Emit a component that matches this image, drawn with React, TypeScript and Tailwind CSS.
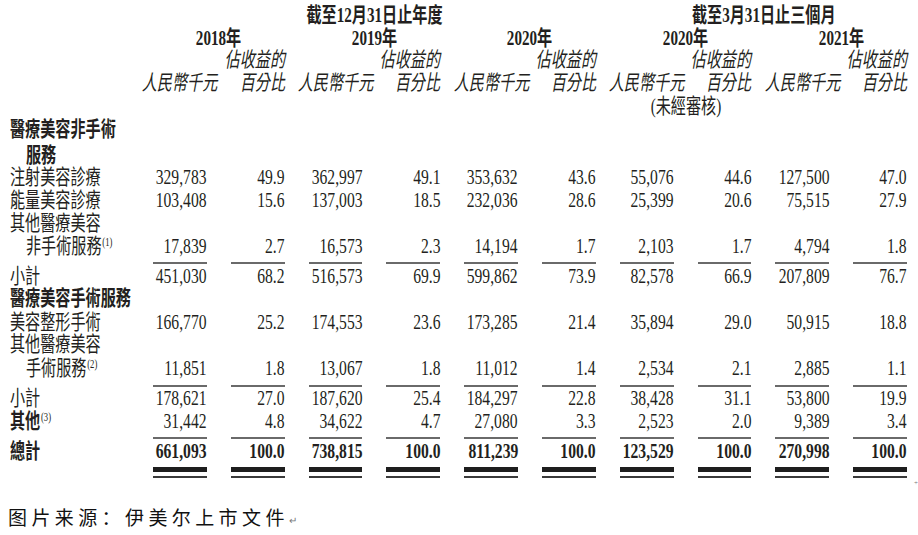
import React from "react";

const FONT = "font-['Liberation_Serif','Noto_Sans_CJK_TC','Noto_Sans_CJK_SC',serif]";

type RowData = {
  label: React.ReactNode;
  values?: string[];
  bold?: boolean;
  indent?: boolean;
  cls: string;
};

function Sup({ n }: { n: string }) {
  return <span className="text-[12px] align-top relative top-[-4px] ml-[1px]">({n})</span>;
}

function Label({ children, bold, indent }: { children: React.ReactNode; bold?: boolean; indent?: boolean }) {
  return (
    <div className={`w-[129px] shrink-0 pl-[10px] ${indent ? "pl-[26px]" : ""}`}>
      <span className={`inline-block whitespace-nowrap origin-left scale-x-[0.72] text-[21px] ${bold ? "font-bold" : ""}`}>
        {children}
      </span>
    </div>
  );
}

function Cell({ v, bold }: { v: string; bold?: boolean }) {
  return (
    <div className="w-[77.8px] shrink-0 text-right">
      <span className={`inline-block whitespace-nowrap origin-right scale-x-[0.71] text-[22px] ${bold ? "font-bold" : ""}`}>
        {v}
      </span>
    </div>
  );
}

function Row({ label, values, bold, indent, cls }: RowData) {
  return (
    <div className={`flex items-center leading-[22px] ${cls}`}>
      <Label bold={bold} indent={indent}>
        {label}
      </Label>
      {values && values.map((v, i) => <Cell key={i} v={v} bold={bold && !!v} />)}
    </div>
  );
}

function Rule({ cls, bar }: { cls: string; bar: string }) {
  return (
    <div className={`flex ${cls}`}>
      <div className="w-[129px] shrink-0" />
      {Array.from({ length: 10 }).map((_, i) => (
        <div key={i} className="w-[77.8px] shrink-0 pl-[24px]">
          <div className={bar} />
        </div>
      ))}
    </div>
  );
}

function Head({ children, cls = "", bold, italic }: { children: React.ReactNode; cls?: string; bold?: boolean; italic?: boolean }) {
  return (
    <span
      className={`inline-block whitespace-nowrap scale-x-[0.72] text-[21px] ${bold ? "font-bold" : ""} ${italic ? "italic" : ""} ${cls}`}
    >
      {children}
    </span>
  );
}

export default function App() {
  const periods = ["2018年", "2019年", "2020年", "2020年", "2021年"];
  return (
    <div className={`w-[918px] h-[535px] bg-white overflow-hidden text-[#231f20] ${FONT}`}>
      <div className="flex flex-col pt-[4px]">
        {/* group headers */}
        <div className="flex h-[22px] items-center leading-[22px]">
          <div className="w-[129px] shrink-0" />
          <div className="w-[466.8px] shrink-0 pl-[24px] flex justify-center">
            <Head bold>截至12月31日止年度</Head>
          </div>
          <div className="w-[311.2px] shrink-0 pl-[24px] flex justify-center">
            <Head bold>截至3月31日止三個月</Head>
          </div>
        </div>
        {/* years */}
        <div className="flex h-[23px] items-center leading-[22px]">
          <div className="w-[129px] shrink-0" />
          {periods.map((p, i) => (
            <div key={i} className="w-[155.6px] shrink-0 pl-[24px] flex justify-center">
              <Head bold>{p}</Head>
            </div>
          ))}
        </div>
        {/* 佔收益的 */}
        <div className="flex h-[22px] items-center leading-[22px]">
          <div className="w-[129px] shrink-0" />
          {periods.map((_, i) => (
            <React.Fragment key={i}>
              <div className="w-[77.8px] shrink-0" />
              <div className="w-[77.8px] shrink-0 flex justify-end">
                <Head italic cls="origin-right">佔收益的</Head>
              </div>
            </React.Fragment>
          ))}
        </div>
        {/* 人民幣千元 / 百分比 */}
        <div className="flex h-[24px] items-center leading-[22px]">
          <div className="w-[129px] shrink-0" />
          {periods.map((_, i) => (
            <React.Fragment key={i}>
              <div className="w-[77.8px] shrink-0 pl-[24px] flex justify-center">
                <Head italic>人民幣千元</Head>
              </div>
              <div className="w-[77.8px] shrink-0 flex justify-end">
                <Head italic cls="origin-right">百分比</Head>
              </div>
            </React.Fragment>
          ))}
        </div>
        {/* 未經審核 */}
        <div className="flex h-[22px] items-center leading-[22px]">
          <div className="w-[129px] shrink-0" />
          <div className="w-[466.8px] shrink-0" />
          <div className="w-[155.6px] shrink-0 pl-[24px] flex justify-center">
            <Head>(未經審核)</Head>
          </div>
        </div>

        <Row cls="mt-[2px] h-[22px]" bold label="醫療美容非手術" />
        <Row cls="mt-[4px] h-[22px]" bold indent label="服務" />
        <Row
          cls="h-[22px]"
          label="注射美容診療"
          values={["329,783", "49.9", "362,997", "49.1", "353,632", "43.6", "55,076", "44.6", "127,500", "47.0"]}
        />
        <Row
          cls="mt-[1px] h-[22px]"
          label="能量美容診療"
          values={["103,408", "15.6", "137,003", "18.5", "232,036", "28.6", "25,399", "20.6", "75,515", "27.9"]}
        />
        <Row cls="h-[23px]" label="其他醫療美容" />
        <Row
          cls="mt-[1px] h-[22px]"
          indent
          label={
            <>
              非手術服務
              <Sup n="1" />
            </>
          }
          values={["17,839", "2.7", "16,573", "2.3", "14,194", "1.7", "2,103", "1.7", "4,794", "1.8"]}
        />
        <Rule cls="mt-[4px]" bar="h-[2px] bg-[#6a6a6a]" />
        <Row
          cls="mt-[2px] h-[22px]"
          label="小計"
          values={["451,030", "68.2", "516,573", "69.9", "599,862", "73.9", "82,578", "66.9", "207,809", "76.7"]}
        />
        <Row cls="h-[22px]" bold label="醫療美容手術服務" />
        <Row
          cls="mt-[2px] h-[22px]"
          label="美容整形手術"
          values={["166,770", "25.2", "174,553", "23.6", "173,285", "21.4", "35,894", "29.0", "50,915", "18.8"]}
        />
        <Row cls="h-[22px]" label="其他醫療美容" />
        <Row
          cls="mt-[2px] h-[22px]"
          indent
          label={
            <>
              手術服務
              <Sup n="2" />
            </>
          }
          values={["11,851", "1.8", "13,067", "1.8", "11,012", "1.4", "2,534", "2.1", "2,885", "1.1"]}
        />
        <Rule cls="mt-[5px]" bar="h-[2px] bg-[#6a6a6a]" />
        <Row
          cls="mt-[1px] h-[22px]"
          label="小計"
          values={["178,621", "27.0", "187,620", "25.4", "184,297", "22.8", "38,428", "31.1", "53,800", "19.9"]}
        />
        <div className="flex items-center leading-[22px] mt-[1px] h-[22px]">
          <Label bold>
            其他
            <span className="font-normal">
              <Sup n="3" />
            </span>
          </Label>
          {["31,442", "4.8", "34,622", "4.7", "27,080", "3.3", "2,523", "2.0", "9,389", "3.4"].map((v, i) => (
            <Cell key={i} v={v} />
          ))}
        </div>
        <Rule cls="mt-[4px]" bar="h-[2px] bg-[#6a6a6a]" />
        <Row
          cls="mt-[2px] h-[22px]"
          bold
          label="總計"
          values={["661,093", "100.0", "738,815", "100.0", "811,239", "100.0", "123,529", "100.0", "270,998", "100.0"]}
        />
        <Rule cls="mt-[4px]" bar="h-[5px] bg-[#1e1e1e]" />
        <Rule cls="mt-[4px]" bar="h-[2px] bg-[#3a3a3a]" />
        <div className="flex h-0">
          <div className="w-[914px] shrink-0" />
          <span className="relative top-[1px] text-[7px] leading-[8px] text-[#777]">+</span>
        </div>

        <div className="mt-[28px] pl-[8px] flex items-center h-[22px] font-['Noto_Sans_CJK_SC',sans-serif] text-[19px] leading-[22px] text-[#111]">
          <span className="tracking-[4.4px]">图片来源：伊美尔上市文件</span>
          <span className="text-[10px] text-[#777] relative top-[3px]">↵</span>
        </div>
      </div>
    </div>
  );
}
